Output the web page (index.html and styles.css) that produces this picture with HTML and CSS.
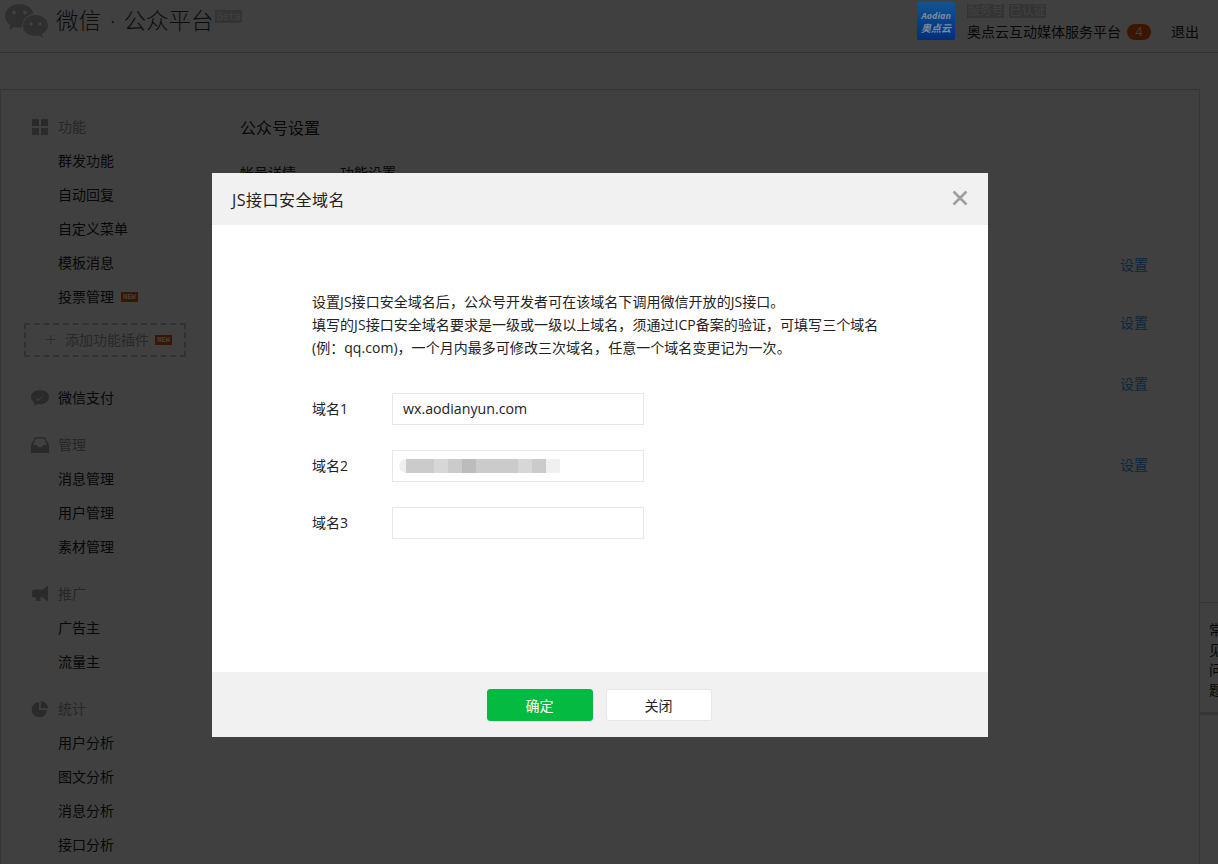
FILE: index.html
```html
<!DOCTYPE html>
<html lang="zh-CN">
<head>
<meta charset="utf-8">
<title>微信公众平台</title>
<link rel="stylesheet" href="styles.css">
</head>
<body>
<header class="topbar">
  <div class="brand">
    <svg class="brand-logo" viewBox="0 0 43 34" aria-hidden="true">
      <path class="logo-a" d="M14.500 0C6.500 0 0 5.300 0 12c0 3.800 2 7 5.500 9.300L4.500 26l5-3c1.500.5 3.200.7 5 .7 8 0 14.500-5.300 14.500-11.700S22.500 0 14.500 0z"/>
      <circle class="logo-e" cx="9" cy="8.500" r="2"/><circle class="logo-e" cx="20" cy="8.500" r="2"/>
      <circle class="logo-e" cx="30.500" cy="23" r="13.500"/>
      <path class="logo-a" d="M30.500 11C23.500 11 18 15.800 18 22s5.500 10 12.500 10c1.300 0 2.500-.2 3.500-.5l4 2.500-1-4c3.500-2 6-5 6-8.500 0-6.200-5.500-10.500-12.500-10.500z"/>
      <circle class="logo-e" cx="26" cy="20" r="1.700"/><circle class="logo-e" cx="35" cy="20" r="1.700"/>
    </svg>
    <span class="brand-name">微信<span class="dot">·</span>公众平台</span>
    <span class="beta">Beta</span>
  </div>
  <div class="account">
    <div class="avatar"><span class="av-en">Aodian</span><span class="av-cn">奥点云</span></div>
    <div class="acct-info">
      <div class="tags"><span class="tag">服务号</span><span class="tag">已认证</span></div>
      <div class="acct-name">奥点云互动媒体服务平台<span class="count">4</span></div>
    </div>
    <a class="logout">退出</a>
  </div>
</header>

<div class="panel">
  <nav class="sidebar">
    <div class="group">
      <div class="nav-head"><svg class="nav-ico" viewBox="0 0 16 16"><path d="M0 0h7v7H0zM9 0h7v7H9zM0 9h7v7H0zM9 9h7v7H9z"/></svg>功能</div>
      <a class="nav-item">群发功能</a>
      <a class="nav-item">自动回复</a>
      <a class="nav-item">自定义菜单</a>
      <a class="nav-item">模板消息</a>
      <a class="nav-item">投票管理<span class="new">NEW</span></a>
      <div class="add-plugin"><span class="plus">+</span>添加功能插件<span class="new">NEW</span></div>
    </div>
    <div class="group pay">
      <div class="nav-head strong"><svg class="nav-ico" viewBox="0 0 18 16"><path d="M9 0C4 0 0 3 0 7c0 2.500 1.500 4.500 3.500 5.700L3 16l3.500-2c.8.200 1.600.300 2.500.300 5 0 9-3.300 9-7.300S14 0 9 0z"/><path class="cut" d="M4 7l3 2.500L14 4.500 7 11z"/></svg>微信支付</div>
    </div>
    <div class="group">
      <div class="nav-head"><svg class="nav-ico" viewBox="0 0 18 16"><path d="M4 0h10l4 8v8H0V8zM5 1.500 2 8h4l1 2h4l1-2h4l-3-6.500z"/></svg>管理</div>
      <a class="nav-item">消息管理</a>
      <a class="nav-item">用户管理</a>
      <a class="nav-item">素材管理</a>
    </div>
    <div class="group">
      <div class="nav-head"><svg class="nav-ico" viewBox="0 0 18 18"><path d="M17 0h1v17h-1l-5-4H9l1 4H5l-1-4H3a3 3 0 0 1-3-3V7a3 3 0 0 1 3-3h9z"/></svg>推广</div>
      <a class="nav-item">广告主</a>
      <a class="nav-item">流量主</a>
    </div>
    <div class="group">
      <div class="nav-head"><svg class="nav-ico" viewBox="0 0 17 17"><path d="M7.500 1v8.500H16A8.200 8.200 0 1 1 7.500 1zM9.300 0A8 8 0 0 1 17 7.700H9.300z"/></svg>统计</div>
      <a class="nav-item">用户分析</a>
      <a class="nav-item">图文分析</a>
      <a class="nav-item">消息分析</a>
      <a class="nav-item">接口分析</a>
    </div>
  </nav>
  <main class="content">
    <h2 class="page-title">公众号设置</h2>
    <div class="tabs"><span>帐号详情</span><span>功能设置</span></div>
    <div class="settings">
      <a class="set set-1">设置</a>
      <a class="set set-2">设置</a>
      <a class="set set-3">设置</a>
      <a class="set set-4">设置</a>
    </div>
  </main>
</div>

<aside class="faq">常<br>见<br>问<br>题</aside>

<div class="mask"></div>

<section class="dialog">
  <div class="dialog-head">
    <h3>JS接口安全域名</h3>
    <svg class="close" viewBox="0 0 16 16" aria-label="关闭"><path d="M1.500 1.500l13 13M14.500 1.500l-13 13"/></svg>
  </div>
  <div class="dialog-body">
    <p class="intro">设置JS接口安全域名后，公众号开发者可在该域名下调用微信开放的JS接口。<br>填写的JS接口安全域名要求是一级或一级以上域名，须通过ICP备案的验证，可填写三个域名<br>(例：qq.com)，一个月内最多可修改三次域名，任意一个域名变更记为一次。</p>
    <div class="form">
      <div class="row"><label>域名1</label><div class="field">wx.aodianyun.com</div></div>
      <div class="row"><label>域名2</label><div class="field"><div class="blur"><i class="b0"></i><i class="b1 w2"></i><i class="b2"></i><i class="b1"></i><i class="b3"></i><i class="b1 w3"></i><i class="b2"></i><i class="b1"></i><i class="b4"></i></div></div></div>
      <div class="row"><label>域名3</label><div class="field"></div></div>
    </div>
  </div>
  <div class="dialog-foot">
    <button class="btn primary">确定</button>
    <button class="btn">关闭</button>
  </div>
</section>
</body>
</html>
```

FILE: styles.css
```css
* { box-sizing: border-box; }
html, body { margin: 0; height: 864px; overflow: hidden; }
body {
  background: #fff;
  color: #222;
  font: 14px/24px "Open Sans", "Noto Sans CJK SC", sans-serif;
  position: relative;
}
a { color: inherit; text-decoration: none; }
h2, h3, p { margin: 0; font-weight: 400; }

.topbar {
  height: 53px;
  border-bottom: 1px solid #d0d0d0;
  display: flex;
  justify-content: space-between;
  padding-left: 5px;
}
.brand { display: flex; align-items: flex-start; }
.brand-logo { width: 43px; height: 34px; margin-top: 4px; }
.logo-a { fill: #bbb; }
.logo-e { fill: #fff; }
.brand-name { font-size: 22.500px; line-height: 34px; margin: 4px 0 0 8px; color: #333; font-weight: 300; }
.dot { padding: 0 8px 0 9px; }
.beta {
  font: 10px/13px "DejaVu Sans Mono", monospace;
  background: #cfcfcf;
  color: #fff;
  padding: 0 1px;
  height: 13px;
  margin: 10px 0 0 2px;
}
.account { display: flex; align-items: flex-start; padding-right: 19px; }
.avatar {
  width: 38px;
  height: 38px;
  margin-top: 2px;
  background: linear-gradient(#0f5595, #022e7c);
  color: #808b97;
  border-radius: 2px;
  display: flex;
  flex-direction: column;
  align-items: center;
  font-weight: 700;
  padding-top: 8px;
  position: relative;
  z-index: 1;
}
.av-en { font-size: 9px; line-height: 12px; font-style: italic; }
.av-cn { font-size: 10px; line-height: 12px; font-style: italic; }
.acct-info { margin-left: 12px; }
.tags { display: flex; gap: 5px; height: 14px; margin-top: 4px; }
.tag { background: #cfcfcf; color: #fff; font-size: 12px; line-height: 14px; width: 37px; text-align: center; }
.acct-name { line-height: 20px; margin-top: 4px; color: #222; display: flex; align-items: center; }
.count {
  width: 24px;
  height: 16px;
  border-radius: 8px;
  background: #f15a00;
  color: #fff;
  font-size: 12px;
  line-height: 16px;
  text-align: center;
  margin-left: 6px;
}
.logout { margin: 20px 0 0 20px; line-height: 24px; }

.panel {
  margin-top: 36px;
  width: 1200px;
  height: 900px;
  border: 1px solid #d3d3d3;
  display: flex;
}
.sidebar { width: 239px; padding-top: 20px; flex: none; }
.group { margin-bottom: 13px; }
.group.pay { margin-top: 24px; }
.nav-head {
  height: 34px;
  display: flex;
  align-items: center;
  padding-left: 57px;
  color: #9a9a9a;
  position: relative;
}
.nav-head.strong { color: #222; }
.nav-ico { position: absolute; left: 30px; top: 9px; width: 18px; height: 16px; fill: #a9a9a9; }
.cut { fill: #fff; }
.nav-item { display: flex; align-items: center; height: 34px; padding-left: 57px; color: #222; }
.new {
  font: 700 7px/10px "DejaVu Sans Mono", monospace;
  background: #e85a00;
  color: #fff;
  width: 17px;
  height: 10px;
  text-align: center;
  margin-left: 7px;
}
.add-plugin {
  margin: 9px 0 0 23px;
  width: 162px;
  height: 34px;
  border: 2px dashed #c4c4c4;
  display: flex;
  align-items: center;
  color: #a0a0a0;
  padding-left: 19px;
}
.plus { font-size: 20px; font-weight: 300; width: 20px; color: #aaa; }
.add-plugin .new { margin-left: 6px; }

.content { flex: 1; position: relative; }
.page-title { font-size: 16px; line-height: 24px; padding-top: 26px; color: #222; }
.tabs { display: flex; gap: 44px; margin-top: 21px; color: #222; }
.set { position: absolute; left: 880px; color: #459ae9; }
.set-1 { top: 163px; }
.set-2 { top: 221px; }
.set-3 { top: 282px; }
.set-4 { top: 363px; }

.faq {
  position: absolute;
  left: 1199px;
  top: 602px;
  width: 40px;
  height: 113px;
  background: #fff;
  border: 1px solid #d3d3d3;
  border-bottom-width: 3px;
  padding: 17px 0 0 9px;
  font-size: 14px;
  line-height: 20px;
}

.mask { position: fixed; inset: 0; background: rgba(0, 0, 0, .75); }

.dialog {
  position: absolute;
  left: 212px;
  top: 173px;
  width: 776px;
  height: 564px;
  background: #fff;
  display: flex;
  flex-direction: column;
}
.dialog-head {
  height: 52px;
  background: #f1f1f1;
  display: flex;
  align-items: center;
  justify-content: space-between;
  padding: 0 20px;
  flex: none;
}
.dialog-head h3 { font-size: 16px; color: #222; padding-top: 1px; letter-spacing: .5px; }
.close { width: 16px; height: 16px; stroke: #9f9f9f; stroke-width: 2.600; fill: none; margin-top: -3px; }
.dialog-body { flex: 1; padding: 65px 0 0 100px; }
.intro { width: 600px; line-height: 23px; color: #222; white-space: nowrap; letter-spacing: .04px; }
.form { margin-top: 34px; display: flex; flex-direction: column; gap: 25px; }
.row { display: flex; align-items: center; height: 32px; }
.row label { width: 80px; color: #222; }
.field {
  width: 252px;
  height: 32px;
  border: 1px solid #e7e7eb;
  padding: 0 10px;
  line-height: 30px;
  color: #222;
  font-size: 14.200px;
  display: flex;
  align-items: center;
}
.blur { display: flex; height: 14px; margin-left: -4px; }
.blur i { width: 14px; display: block; }
.blur .b0 { background: #f0f0f0; width: 7px; border-radius: 7px 0 0 7px; }
.b1 { background: #cbcbcb; }
.b2 { background: #d7d7d7; }
.b3 { background: #bcbcbc; }
.b4 { background: #f0f0f0; }
.blur .w2 { width: 28px; }
.blur .w3 { width: 42px; }
.dialog-foot {
  height: 65px;
  background: #f1f1f1;
  display: flex;
  justify-content: center;
  align-items: flex-start;
  gap: 13px;
  padding: 17px 2px 0 0;
  flex: none;
}
.btn {
  width: 106px;
  height: 32px;
  border: 1px solid #e7e7eb;
  border-radius: 3px;
  background: #fff;
  color: #222;
  font: 14px "Open Sans", "Noto Sans CJK SC", sans-serif;
  padding: 0;
}
.btn.primary { background: #04ba40; border-color: #04ba40; color: #fff; }
```
